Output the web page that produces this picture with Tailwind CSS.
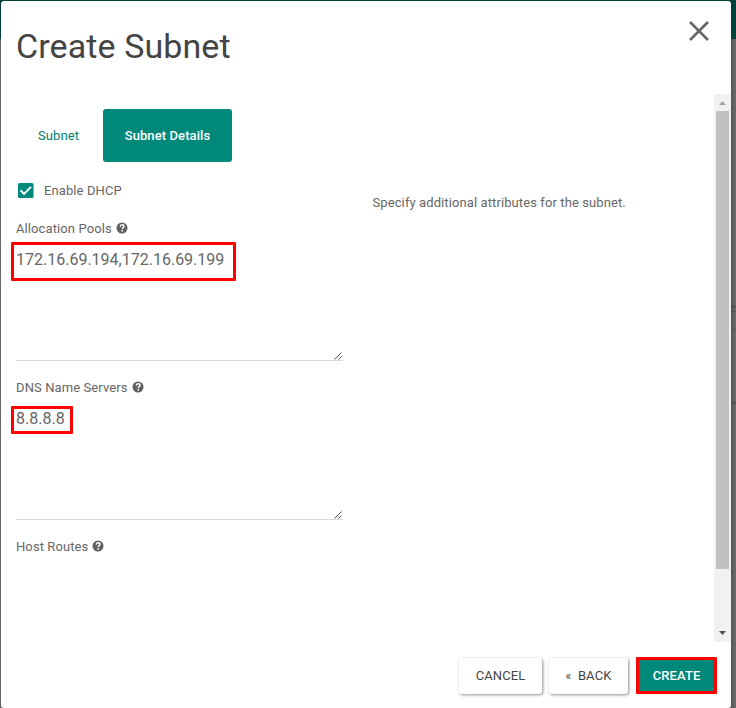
<!DOCTYPE html>
<html lang="en">
<head>
<meta charset="utf-8">
<title>Create Subnet</title>
<script src="https://cdn.jsdelivr.net/npm/@tailwindcss/browser@4"></script>
</head>
<body class="relative h-[708px] w-[736px] overflow-hidden bg-[#666] pt-px pl-px font-[Roboto,sans-serif] text-[13px] leading-5 tracking-[0.1px] text-[#666]">
<svg width="0" height="0" class="absolute">
  <symbol id="help" viewBox="0 0 12 12"><circle cx="6" cy="6" r="5.5" fill="#606060"/><path d="M4.2 4.6C4.3 3.3 5 2.7 6.1 2.7S8 3.4 8 4.4C8 5.6 6.2 5.7 6.2 7.1" fill="none" stroke="#fff" stroke-width="1.4"/><path d="M5.4 8h1.6v1.4H5.4z" fill="#fff"/></symbol>
  <symbol id="grip" viewBox="0 0 8 8"><path d="M.5 7.5l7-7M4.5 7.5l3-3" stroke="#555" stroke-width="1" fill="none"/></symbol>
</svg>
<div class="absolute inset-x-0 top-0 h-[39px] bg-[#004039]"></div>
<div class="absolute top-[39px] right-0 bottom-0 w-[5px] bg-linear-to-r from-[#565656] to-[#6c6c6c]">
  <div class="mt-[267px] h-px bg-[#444]"></div><div class="mt-1 h-px w-1 bg-[#444]"></div><div class="mt-[17px] h-px bg-[#555]"></div><div class="mt-[72px] h-0.5 bg-[#555]"></div>
</div>
<main class="relative flex h-[707px] w-[730px] flex-col rounded-[3px] bg-white">
  <header class="flex h-[93px] shrink-0 justify-between pt-[20px] pr-[22px] pl-[15px]">
    <h1 class="text-[34px] leading-[50px] tracking-[0.1px] text-[#444]">Create Subnet</h1>
    <svg width="20" height="20" viewBox="0 0 20 20"><path d="M1 1l18 18M19 1L1 19" stroke="#666" stroke-width="2.6"/></svg>
  </header>
  <div class="flex h-[548px] shrink-0">
    <div class="w-[356px] pt-[15px] pl-[15px]">
      <nav class="flex h-[53px] items-center">
        <a class="w-[87px] pl-[22px] text-[#00806f]">Subnet</a>
        <a class="flex h-[53px] w-[129px] items-center justify-center rounded-[3px] bg-[#00897b] font-medium text-white">Subnet Details</a>
      </nav>
      <label class="mt-[19px] flex h-5 items-center pl-[2px]">
        <svg class="-mt-px" width="16" height="15" viewBox="0 0 16 15"><rect width="15.5" height="15" rx="1.5" fill="#00897b"/><path d="M2.5 7.3l3.5 3.6 7-7" fill="none" stroke="#fff" stroke-width="2"/></svg>
        <span class="ml-[10px]">Enable DHCP</span>
      </label>
      <div class="mt-[18px] flex h-5 items-center gap-1">Allocation Pools<svg class="-mt-[2px]" width="12" height="12"><use href="#help"/></svg></div>
      <div class="flex h-[122px] w-[327px] justify-between border-b border-[#d9d9d9] pt-[9px] text-[16px] leading-[24px] tracking-[0px]"><span>172.16.69.194,172.16.69.199</span><svg class="mr-px self-end" width="8" height="8"><use href="#grip"/></svg></div>
      <div class="mt-[17px] flex h-5 items-center gap-1">DNS Name Servers<svg class="-mt-[2px]" width="12" height="12"><use href="#help"/></svg></div>
      <div class="flex h-[122px] w-[327px] justify-between border-b border-[#d9d9d9] pt-[9px] text-[16px] leading-[24px] tracking-[0px]"><span>8.8.8.8</span><svg class="mr-px self-end" width="8" height="8"><use href="#grip"/></svg></div>
      <div class="mt-[17px] flex h-5 items-center gap-1">Host Routes<svg class="-mt-[2px]" width="12" height="12"><use href="#help"/></svg></div>
    </div>
    <p class="w-[357px] pt-[99px] pl-[15.5px]">Specify additional attributes for the subnet.</p>
    <div class="flex w-[17px] flex-col items-center justify-between bg-[#f1f1f1]">
      <svg width="17" height="17" class="shrink-0"><path d="M5 11h7L8.5 7z" fill="#a3a3a3"/></svg>
      <div class="mb-auto h-[458px] w-[13px] bg-[#c1c1c1]"></div>
      <svg width="17" height="17" class="shrink-0"><path d="M5 6h7l-3.5 4z" fill="#505050"/></svg>
    </div>
  </div>
  <footer class="flex justify-end pt-[16px] pr-[14px] text-[#444]">
    <button class="mr-[7px] h-[36px] w-[83px] rounded-[3px] shadow-[1px_1px_3px_rgba(0,0,0,0.45)]">CANCEL</button>
    <button class="mr-[8px] h-[36px] w-[79px] rounded-[3px] shadow-[1px_1px_3px_rgba(0,0,0,0.45)]"><span class="text-[12px]">«</span>&nbsp; BACK</button>
    <button class="-mt-px h-[37px] w-[81px] rounded-[1px] border-3 border-[#ff0000] bg-[#00897b] font-medium text-white">CREATE</button>
  </footer>
</main>
<div class="absolute top-[242px] left-[11px] h-[39px] w-[225px] rounded-[1px] border-3 border-[#ff0000]"></div>
<div class="absolute top-[406px] left-[11px] h-[28px] w-[62px] rounded-[1px] border-3 border-[#ff0000]"></div>
</body>
</html>
